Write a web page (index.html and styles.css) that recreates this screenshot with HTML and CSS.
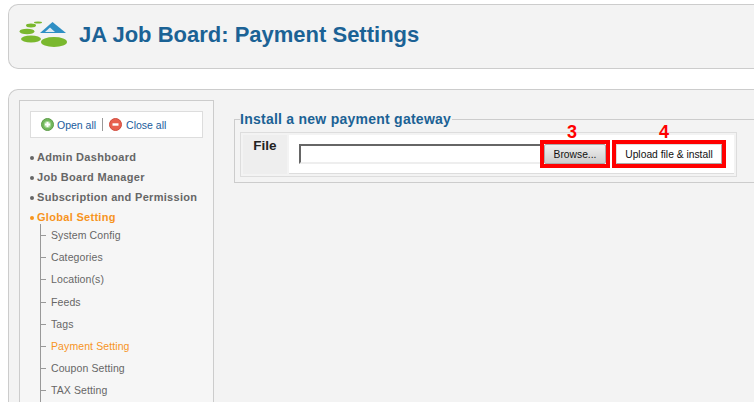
FILE: index.html
```html
<!DOCTYPE html>
<html lang="en">
<head>
  <meta charset="UTF-8" />
  <title>JA Job Board: Payment Settings</title>
  <link rel="stylesheet" href="styles.css">
</head>
<body>

  <div class="page-head">
    <svg class="logo" width="50" height="28" viewBox="0 0 50 28">
      <ellipse cx="35" cy="22" rx="13" ry="5" fill="#7ab82e" />
      <ellipse cx="12" cy="19" rx="10" ry="3.5" fill="#7ab82e" />
      <ellipse cx="8" cy="11.5" rx="7.5" ry="2.7" fill="#7ab82e" />
      <ellipse cx="12" cy="5.5" rx="5" ry="1.9" fill="#7ab82e" />
      <ellipse cx="19" cy="2.5" rx="4" ry="1" fill="#7ab82e" />
      <path d="M21 13 L33.5 2 L47 13 Z" fill="#2f8fc4" />
      <path d="M26 12 L31 7.5 L36 12 Z" fill="#dcebf3" />
    </svg>
    <h1>JA Job Board: Payment Settings</h1>
  </div>

  <div class="main">
    <div class="sidebar">
      <div class="open-close">
        <svg width="13" height="13" viewBox="0 0 13 13">
          <circle cx="6.5" cy="6.5" r="6" fill="#72b85c" stroke="#5c9a48" />
          <circle cx="6.5" cy="6.5" r="3.5" fill="#a8d89a" />
          <path d="M6.5 4 V9 M4 6.5 H9" stroke="#fff" stroke-width="2" />
        </svg>
        <a class="open-link">Open all</a>
        <span class="sep"></span>
        <svg width="13" height="13" viewBox="0 0 13 13">
          <circle cx="6.5" cy="6.5" r="6" fill="#e8604f" stroke="#cf4a3c" />
          <path d="M3.5 6.5 H9.5" stroke="#fff" stroke-width="2.4" />
        </svg>
        <a class="close-link">Close all</a>
      </div>

      <ul class="menu">
        <li>Admin Dashboard</li>
        <li>Job Board Manager</li>
        <li>Subscription and Permission</li>
        <li class="active">Global Setting</li>
      </ul>
      <ul class="submenu">
        <li>System Config</li>
        <li>Categories</li>
        <li>Location(s)</li>
        <li>Feeds</li>
        <li>Tags</li>
        <li class="active">Payment Setting</li>
        <li>Coupon Setting</li>
        <li>TAX Setting</li>
      </ul>
    </div>

    <div class="content">
      <fieldset class="install">
        <legend>Install a new payment gateway</legend>
        <div class="file-row">
          <div class="file-label">File</div>
          <div class="file-value">
            <input class="file-text" type="text" />
            <span class="mark">
              <span class="num num-browse">3</span>
              <button class="browse" type="button">Browse...</button>
            </span>
            <span class="mark">
              <span class="num">4</span>
              <button class="upload" type="button">Upload file &amp; install</button>
            </span>
          </div>
        </div>
      </fieldset>
    </div>
  </div>

</body>
</html>
```

FILE: styles.css
```css
body {
  font-family: "Liberation Sans", Arial, sans-serif;
  background: #fff;
  margin: 0;
  height: 402px;
  overflow: hidden;
  display: flex;
  flex-direction: column;
}
.page-head {
  display: flex;
  align-items: center;
  gap: 10px;
  box-sizing: border-box;
  height: 65px;
  flex: none;
  margin: 4px 1px 20px 8px;
  padding: 0 0 3px 10px;
  background: #f3f3f3;
  border: 1px solid #ccc;
  border-right: none;
  border-radius: 10px 0 0 10px;
}
.page-head h1 {
  margin: 0;
  font-size: 22px;
  color: #1b6295;
}
.logo {
  margin-bottom: 2px;
}
.main {
  display: flex;
  gap: 20px;
  box-sizing: border-box;
  flex: 1;
  min-height: 0;
  margin: 0 1px 0 8px;
  padding: 10px 0 0 10px;
  background: #f3f3f3;
  border: 1px solid #ccc;
  border-width: 1px 0 0 1px;
  border-radius: 10px 0 0 0;
}
.sidebar {
  box-sizing: border-box;
  width: 195px;
  flex: none;
  padding: 10px 10px 0;
  background: #f6f6f6;
  border: 1px solid #ccc;
  border-bottom: none;
}
.open-close {
  display: flex;
  align-items: center;
  box-sizing: border-box;
  height: 27px;
  padding-left: 10px;
  background: #fff;
  border: 1px solid #ddd;
  font-size: 10.5px;
  color: #1a5c9c;
}
.open-link {
  margin-left: 3px;
}
.close-link {
  margin-left: 4px;
}
.sep {
  width: 1px;
  height: 13px;
  background: #999;
  margin: 0 6px;
}
.menu, .submenu {
  list-style: none;
  margin: 0;
  padding: 0;
}
.menu {
  margin-top: 9px;
}
.menu li {
  position: relative;
  height: 20px;
  line-height: 20px;
  padding-left: 7px;
  font-size: 11px;
  font-weight: bold;
  letter-spacing: 0.3px;
  color: #666;
}
.menu li::before {
  content: "";
  position: absolute;
  left: 0;
  top: 9px;
  width: 4px;
  height: 4px;
  border-radius: 50%;
  background: #666;
}
.menu li.active {
  color: #f7941d;
}
.menu li.active::before {
  background: #f7941d;
}
.submenu {
  margin: -3px 0 0 10px;
  border-left: 1px solid #999;
}
.submenu li {
  position: relative;
  height: 22.2px;
  line-height: 22.2px;
  padding-left: 10px;
  font-size: 10.5px;
  letter-spacing: 0.1px;
  color: #666;
}
.submenu li::before {
  content: "";
  position: absolute;
  left: 0;
  top: 11px;
  width: 5px;
  height: 1px;
  background: #999;
}
.submenu li.active {
  color: #f7941d;
}
.content {
  flex: 1;
  min-width: 0;
  padding-top: 11px;
}
.install {
  margin: 0;
  padding: 5px 0 5px 5px;
  border: 1px solid #ccc;
  border-right: none;
  min-width: 0;
}
.install legend {
  padding: 0 1px 0 0;
  font-size: 14px;
  font-weight: bold;
  letter-spacing: 0.25px;
  color: #1b6295;
}
.file-row {
  display: flex;
  box-sizing: border-box;
  width: 497px;
  height: 45px;
  padding: 2px;
  gap: 2px;
  background: #f3f3f3;
  border: 1px solid #ddd;
}
.file-label {
  width: 44px;
  padding-top: 3px;
  text-align: center;
  font-size: 13.5px;
  font-weight: bold;
  color: #222;
  background: #eee;
}
.file-value {
  flex: 1;
  display: flex;
  align-items: center;
  padding-left: 10px;
  background: #fff;
  border-bottom: 1px solid #ddd;
}
.file-text {
  box-sizing: border-box;
  width: 241px;
  height: 20px;
  padding: 0;
  background: #fff;
  border-style: solid;
  border-width: 2px 0 2px 2px;
  border-color: #666 #eee #eee #666;
  border-radius: 0;
}
.mark {
  position: relative;
  display: flex;
  align-items: center;
  box-sizing: border-box;
  height: 28px;
  border: 4px solid #f00;
}
.mark + .mark {
  margin-left: 2px;
}
.num {
  position: absolute;
  top: -22px;
  left: -10px;
  right: 0;
  text-align: center;
  font-size: 18px;
  font-weight: bold;
  line-height: 20px;
  color: #f00;
}
.num-browse {
  left: -6px;
}
.browse, .upload {
  height: 20px;
  padding: 0;
  font-family: "Liberation Sans", Arial, sans-serif;
  font-size: 10.3px;
  color: #111;
}
.browse {
  width: 62px;
  background: linear-gradient(#f0f0f0, #ccc);
  border: 1px solid #aaa;
  border-radius: 2px;
}
.upload {
  width: 106px;
  background: #fff;
  border: 1px solid;
  border-color: #ddd #aaa #aaa #ddd;
}
```
